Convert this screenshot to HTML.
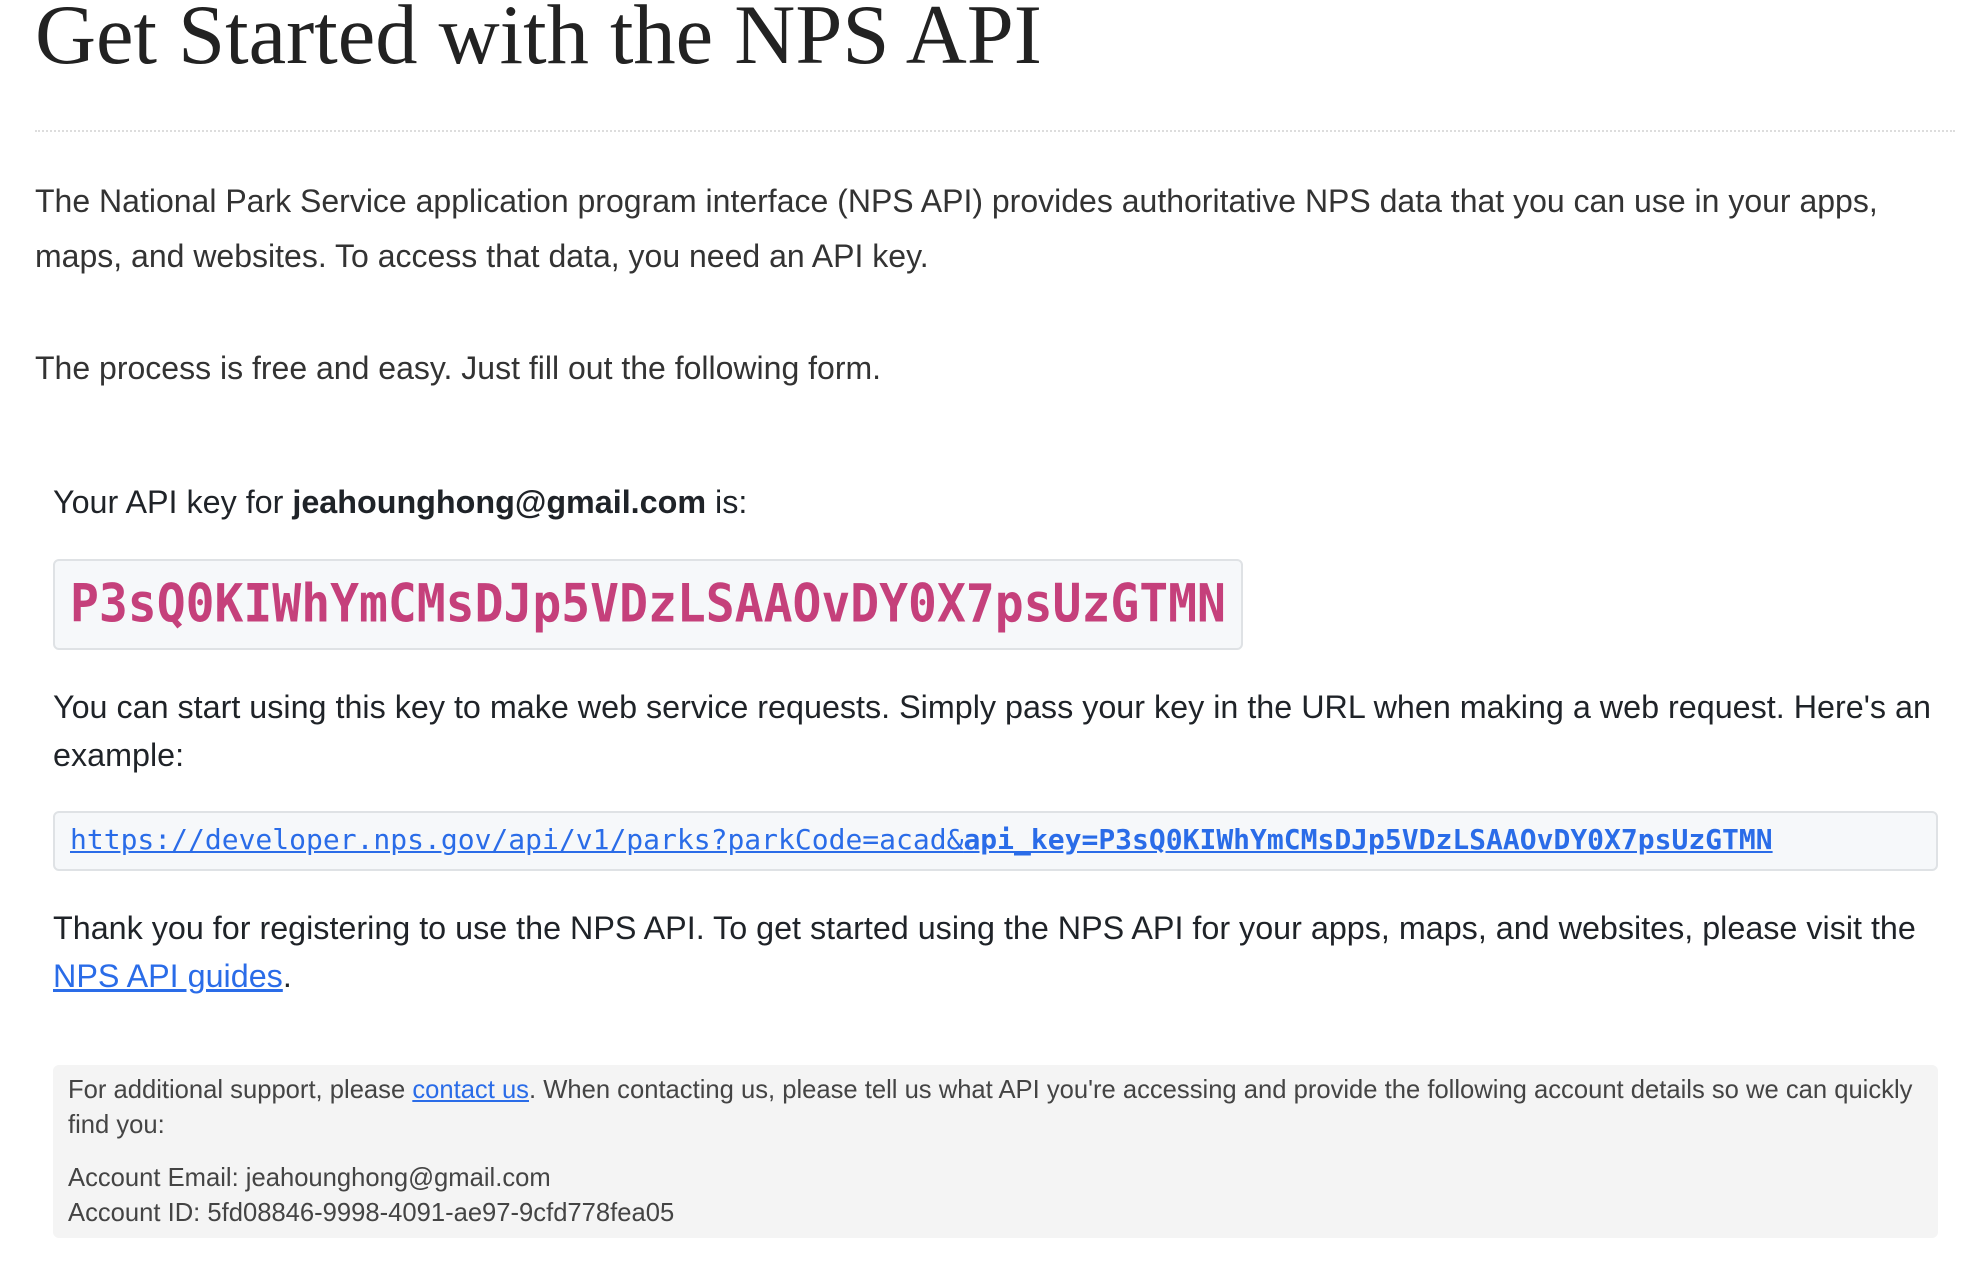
<!DOCTYPE html>
<html><head><meta charset="utf-8"><style>
body{margin:0;background:#fff;width:1970px;height:1280px;overflow:hidden;font-family:"Liberation Sans",Arial,sans-serif;color:#333;}
.a{position:absolute;white-space:nowrap;}
h1{position:absolute;left:35px;top:-13px;margin:0;font-family:"Liberation Serif",Georgia,serif;font-weight:normal;font-size:84.5px;color:#222;white-space:nowrap;}
.hr{position:absolute;left:35px;top:130px;width:1920px;border-top:2px dotted #ddd;}
.p{font-size:32px;line-height:55px;color:#333;}
.q{font-size:32.3px;line-height:48px;color:#1f2328;}
.box{position:absolute;background:#f6f8fa;border:2px solid #dfe2e5;border-radius:6px;box-sizing:border-box;}
.mono{font-family:"DejaVu Sans Mono","Liberation Mono",monospace;}
a{color:#2a6ce8;text-decoration:underline;}
.g{position:absolute;left:53px;top:1065px;width:1885px;height:173px;background:#f4f4f4;border-radius:6px;}
.s{font-size:25.6px;color:#444;}
</style></head><body>
<h1>Get Started with the NPS API</h1>
<div class="hr"></div>
<div class="a p" style="left:35px;top:174px">The National Park Service application program interface (NPS API) provides authoritative NPS data that you can use in your apps,<br>maps, and websites. To access that data, you need an API key.</div>
<div class="a p" style="left:35px;top:341px">The process is free and easy. Just fill out the following form.</div>
<div class="a q" style="left:53px;top:478px">Your API key for <b>jeahounghong@gmail.com</b> is:</div>
<div class="box" style="left:53px;top:559px;width:1190px;height:91px"></div>
<div class="a mono" style="left:70px;top:572px;font-size:48px;line-height:64px;font-weight:bold;color:#c5407b;transform:scaleY(1.1);transform-origin:left center">P3sQ0KIWhYmCMsDJp5VDzLSAAOvDY0X7psUzGTMN</div>
<div class="a q" style="left:53px;top:683px">You can start using this key to make web service requests. Simply pass your key in the URL when making a web request. Here's an<br>example:</div>
<div class="box" style="left:53px;top:811px;width:1885px;height:60px"></div>
<div class="a mono" style="left:70px;top:822px;font-size:28px;line-height:36px"><a>https://developer.nps.gov/api/v1/parks?parkCode=acad&amp;<b>api_key=P3sQ0KIWhYmCMsDJp5VDzLSAAOvDY0X7psUzGTMN</b></a></div>
<div class="a q" style="left:53px;top:904px">Thank you for registering to use the NPS API. To get started using the NPS API for your apps, maps, and websites, please visit the<br><a>NPS API guides</a>.</div>
<div class="g"></div>
<div class="a s" style="left:68px;top:1073px;line-height:35px">For additional support, please <a>contact us</a>. When contacting us, please tell us what API you're accessing and provide the following account details so we can quickly<br>find you:</div>
<div class="a s" style="left:68px;top:1161px;line-height:35px">Account Email: jeahounghong@gmail.com<br>Account ID: 5fd08846-9998-4091-ae97-9cfd778fea05</div>
</body></html>
